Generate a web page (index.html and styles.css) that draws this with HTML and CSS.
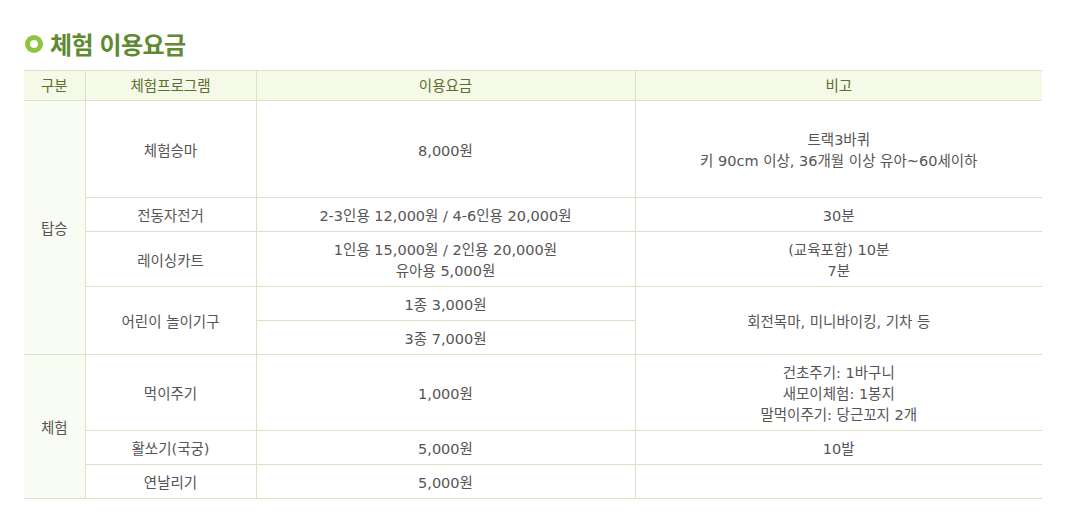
FILE: index.html
```html
<!DOCTYPE html>
<html lang="ko">
<head>
<meta charset="utf-8">
<link rel="stylesheet" href="styles.css">
</head>
<body>
<div class="page">
  <h2 class="title"><span class="dot"></span>체험 이용요금</h2>
  <table class="fee">
    <colgroup>
      <col class="c1"><col class="c2"><col class="c3"><col class="c4">
    </colgroup>
    <thead>
      <tr><th>구분</th><th>체험프로그램</th><th>이용요금</th><th>비고</th></tr>
    </thead>
    <tbody>
      <tr class="tall">
        <td class="cat" rowspan="5">탑승</td>
        <td>체험승마</td>
        <td>8,000원</td>
        <td>트랙3바퀴<br>키 90cm 이상, 36개월 이상 유아~60세이하</td>
      </tr>
      <tr>
        <td>전동자전거</td>
        <td>2-3인용 12,000원 / 4-6인용 20,000원</td>
        <td>30분</td>
      </tr>
      <tr>
        <td>레이싱카트</td>
        <td>1인용 15,000원 / 2인용 20,000원<br>유아용 5,000원</td>
        <td>(교육포함) 10분<br>7분</td>
      </tr>
      <tr>
        <td rowspan="2">어린이 놀이기구</td>
        <td>1종 3,000원</td>
        <td rowspan="2">회전목마, 미니바이킹, 기차 등</td>
      </tr>
      <tr>
        <td>3종 7,000원</td>
      </tr>
      <tr>
        <td class="cat" rowspan="3">체험</td>
        <td>먹이주기</td>
        <td>1,000원</td>
        <td>건초주기: 1바구니<br>새모이체험: 1봉지<br>말먹이주기: 당근꼬지 2개</td>
      </tr>
      <tr>
        <td>활쏘기(국궁)</td>
        <td>5,000원</td>
        <td>10발</td>
      </tr>
      <tr>
        <td>연날리기</td>
        <td>5,000원</td>
        <td></td>
      </tr>
    </tbody>
  </table>
</div>
</body>
</html>
```

FILE: styles.css
```css
html, body {
  margin: 0;
  padding: 0;
  background: #fff;
}
body {
  font-family: "DejaVu Sans", "Noto Sans CJK KR", sans-serif;
  color: #555;
}
.page {
  padding: 29px 27px 0 24px;
}
.title {
  display: flex;
  align-items: center;
  gap: 7px;
  margin: 0 0 11px 0;
  font-family: "Noto Sans CJK KR", sans-serif;
  font-size: 24px;
  font-weight: bold;
  color: #5e8a32;
  line-height: 30px;
  letter-spacing: -0.5px;
}
.dot {
  width: 8px;
  height: 8px;
  border: 5px solid #8cc63e;
  border-radius: 50%;
  margin-left: 1px;
  box-shadow: inset 0 0 1px rgba(0,0,0,0.15);
}
.fee {
  width: 1018px;
  border-collapse: collapse;
  table-layout: fixed;
  font-size: 14.5px;
  line-height: 21px;
  text-align: center;
}
.c1 { width: 61px; }
.c2 { width: 171px; }
.c3 { width: 379px; }
.c4 { width: 407px; }
.fee th {
  background: #f4f9e8;
  color: #5f6e2c;
  font-weight: normal;
  height: 27px;
  padding: 2px 0 0 0;
  border-top: 1px solid #dbe2c6;
  border-bottom: 1px solid #dbe2c6;
  border-left: 1px solid #dbe2c6;
}
.fee th:first-child { border-left: none; }
.fee td {
  padding: 8px 4px 4px;
  border: 1px solid #dbe2c6;
  color: #555;
}
.fee tr td:last-child { border-right: none; }
.fee td.cat {
  background: #f9fcf2;
  border-left: none;
}
.fee tr.tall td { height: 84px; }
```
